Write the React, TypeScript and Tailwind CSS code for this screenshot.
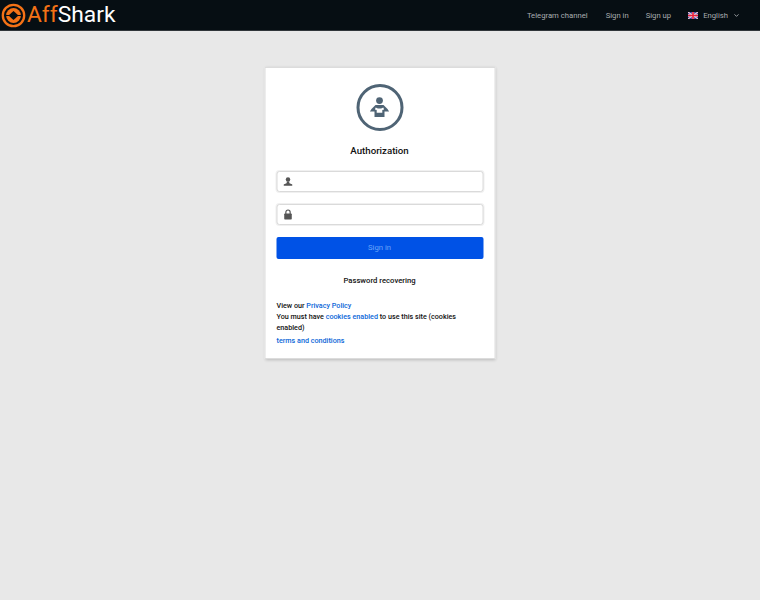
import React from 'react';
import { ChevronDown } from 'lucide-react';

function Logo() {
    return (
        <div className="flex items-center h-full">
            <svg width="25" height="25" viewBox="0 0 25 25" fill="none" className="ml-[1px]">
                <circle cx="12.5" cy="12.5" r="10.7" stroke="#f47216" strokeWidth="2.3" />
                <circle cx="12.5" cy="12.5" r="7.4" fill="#f47216" />
                <path d="M12.5 8 L17.5 12.5 L12.5 17 L7.5 12.5 Z" fill="#060e13" />
                <path d="M4 12.5 H8 M17 12.5 H21" stroke="#060e13" strokeWidth="1.2" />
            </svg>
            <span className="text-[22.8px] leading-none font-['Roboto',sans-serif] ml-[1px]">
                <span className="text-[#f47216]">Aff</span>
                <span className="text-white">Shark</span>
            </span>
        </div>
    );
}

function Flag() {
    return (
        <svg width="10" height="7" viewBox="0 0 10 7" className="block">
            <rect width="10" height="7" fill="#2b3a9f" />
            <path d="M0 0 L10 7 M10 0 L0 7" stroke="#f0c8d0" strokeWidth="1.2" />
            <path d="M5 0 V7 M0 3.5 H10" stroke="#f0dce0" strokeWidth="2.4" />
            <path d="M5 0 V7 M0 3.5 H10" stroke="#e8203c" strokeWidth="1.6" />
        </svg>
    );
}

function UserBadge() {
    return (
        <div className="w-[47px] h-[47px] rounded-full border-[3px] border-[#4f6475] flex items-center justify-center">
            <svg width="20" height="21" viewBox="0 0 20 21" fill="#4f6475">
                <circle cx="10" cy="3.6" r="3.4" />
                <path fillRule="evenodd" d="M6 8 H14 L18 12 L19.6 14.6 H15 V20 H5 V14.6 H0.4 L2 12 Z M6.2 10.6 L8.4 11.6 H11.6 L13.8 10.6 L14.6 12.6 L12.8 13 V15.8 H7.2 V13 L5.4 12.6 Z" />
            </svg>
        </div>
    );
}

function InputRow({ icon }: { icon: React.ReactNode }) {
    return (
        <div className="h-[21px] rounded-[3px] border border-[#dadada] shadow-[0_0_0_1px_#f0f0f0] flex items-center pl-[6px] bg-white">
            {icon}
        </div>
    );
}

export default function App() {
    return (
        <div className="min-h-[600px] bg-[#e8e8e8] font-['Roboto',sans-serif]">
            <header className="h-[31px] bg-[#060e13] border-b border-[#30363a] flex items-center justify-between">
                <Logo />
                <nav className="flex items-center text-[7.7px] text-[#a9adb0] pr-[20px] pt-[1px]">
                    <span>Telegram channel</span>
                    <span className="ml-[18px]">Sign in</span>
                    <span className="ml-[17px]">Sign up</span>
                    <span className="ml-[17px]"><Flag /></span>
                    <span className="ml-[5px]">English</span>
                    <ChevronDown size={7} strokeWidth={3} className="ml-[5px]" />
                </nav>
            </header>

            <main className="flex justify-center pt-[36px]">
                <div className="w-[231px] h-[292px] -translate-x-[0.5px] bg-white border border-[#dcdcdc] shadow-[0_1px_3px_rgba(0,0,0,0.2)] px-[11px] pt-[16px]">
                    <div className="flex justify-center">
                        <UserBadge />
                    </div>
                    <h1 className="mt-[13px] text-center text-[9.7px] leading-[14px] font-medium text-[#111]">Authorization</h1>
                    <div className="mt-[13px] flex flex-col gap-[12px]">
                        <InputRow icon={
                            <svg width="9" height="9" viewBox="0 0 10 10" fill="#555">
                                <circle cx="5" cy="2.8" r="2.5" />
                                <path d="M3.8 5 H6.2 L6.6 7 L10 8.2 V9.6 H0 V8.2 L3.4 7 Z" />
                            </svg>
                        } />
                        <InputRow icon={
                            <svg width="9" height="11" viewBox="0 0 10 12" fill="none">
                                <path d="M2.6 5.5 V3.4 A2.4 2.4 0 0 1 7.4 3.4 V5.5" stroke="#555" strokeWidth="1.3" />
                                <rect x="0.8" y="5" width="8.4" height="6.6" rx="0.8" fill="#555" />
                            </svg>
                        } />
                    </div>
                    <button className="mt-[12px] block w-full h-[22px] rounded-[2px] bg-[#0052e6] text-[#6aa6fa] text-[7.7px] text-center">Sign in</button>
                    <p className="mt-[16px] text-center text-[7.7px] leading-[12px] font-medium text-[#111]">Password recovering</p>
                    <div className="mt-[13px] pl-[0.5px] text-[7.2px] leading-[11px] font-medium text-[#111]">
                        <p>View our <a className="text-[#0a66d8]">Privacy Policy</a></p>
                        <p>You must have <a className="text-[#0a66d8]">cookies enabled</a> to use this site (cookies enabled)</p>
                        <p className="mt-[2px]"><a className="text-[#0a66d8]">terms and conditions</a></p>
                    </div>
                </div>
            </main>
        </div>
    );
}
